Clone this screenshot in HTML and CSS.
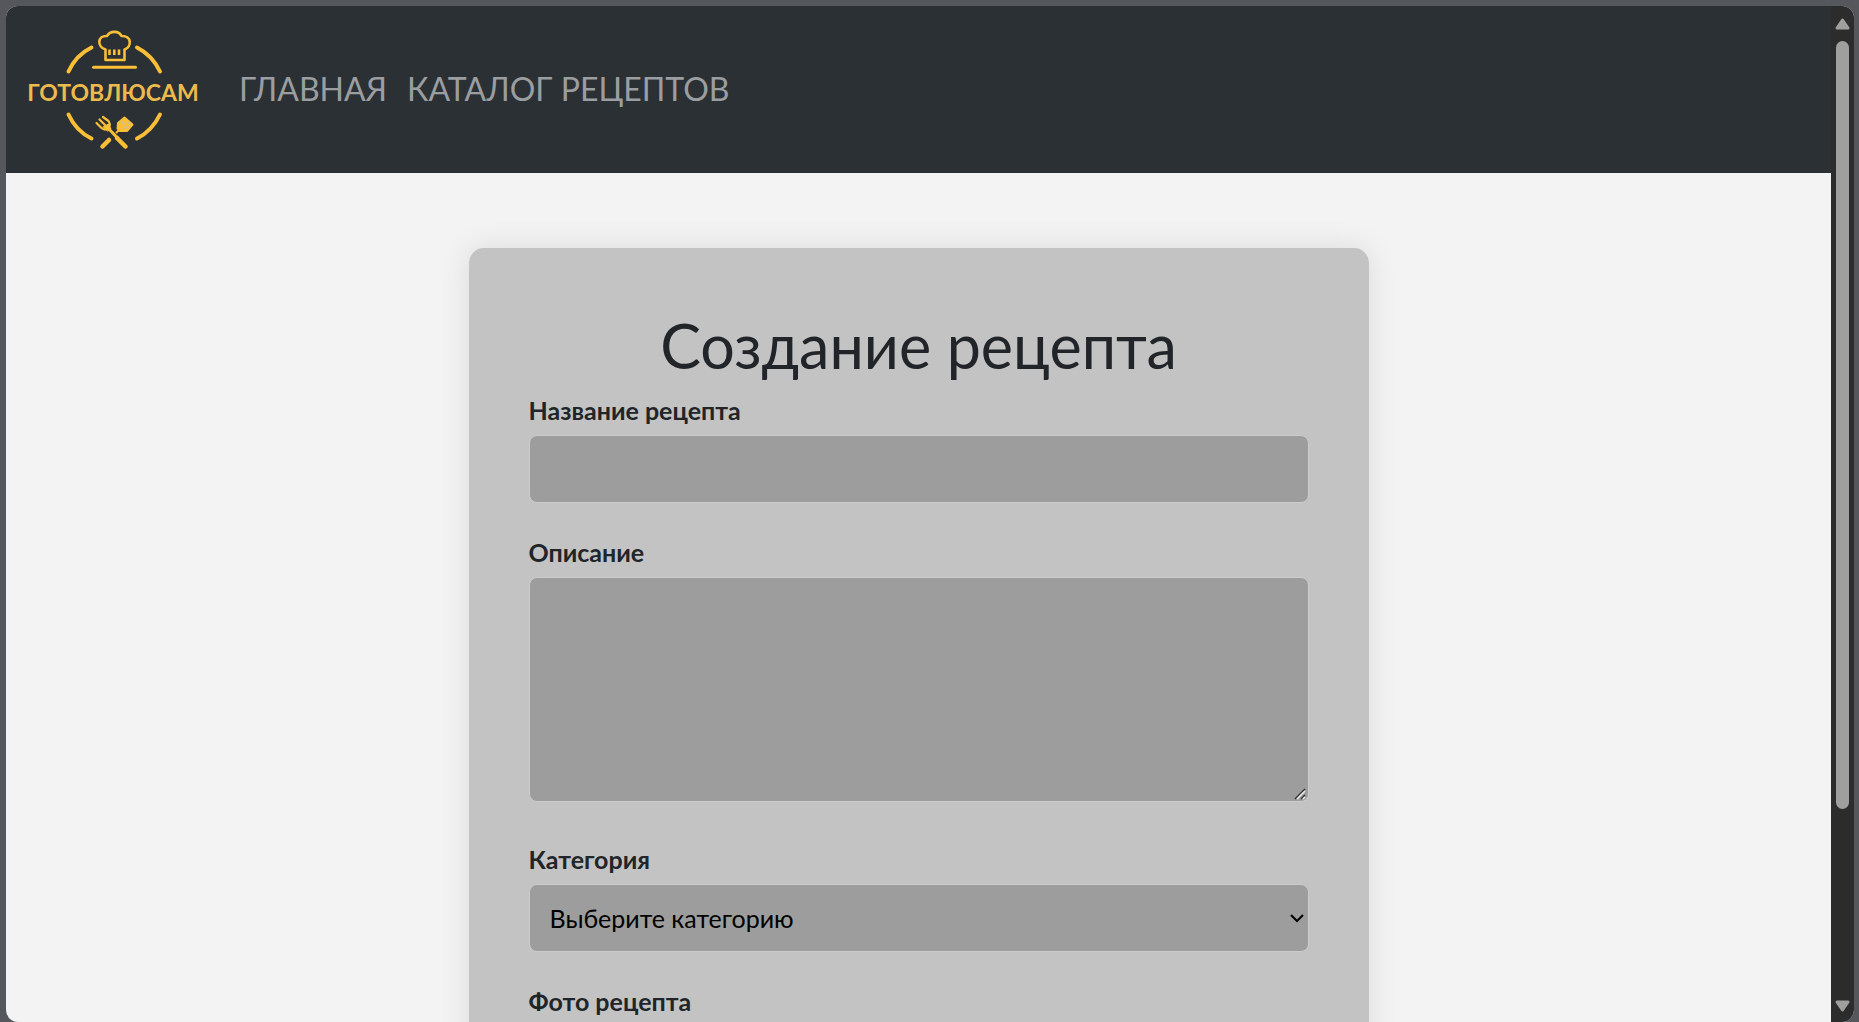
FILE: index.html
```html
<!DOCTYPE html>
<html lang="ru">
<head>
<meta charset="utf-8">
<title>Создание рецепта</title>
<link rel="stylesheet" href="styles.css">
</head>
<body>
<div class="window">
  <div class="page">
    <header class="navbar">
      <a class="brand" href="#" aria-label="ГотовлюСам">
        <svg width="180" height="124" viewBox="24 27 180 124" fill="none" stroke="#fabf37" stroke-width="4" stroke-linecap="round" stroke-linejoin="round">
          <path d="M68.500 71.500Q76 55 91.500 47.500M137 47.500Q152 55 160 71.500M68.500 114.500Q76 131 91.500 138.500M137 138.500Q152 131 160 114.500"/>
          <path d="M93.500 67.300H135.500" stroke-width="3"/>
          <path d="M105.500 60V49.500C97 47 97 35.500 107 36C110 30.500 119 30.500 121.500 36C132 35.500 132 47 124.500 49.500V60Z" stroke-width="2.600"/>
          <path d="M109.500 49.500V55M114.300 49.500V55M119 49.500V55" stroke-width="2.600" stroke-linecap="butt"/>
          <path d="M96.500 123L101.500 128Q105 131 108.500 128Q111 125 108.500 121L103 117M99.500 119.500L105 125" stroke-width="2.200"/>
          <path d="M103 127L108.500 124L111 129L108 131Z" fill="#fabf37" stroke-width="1"/>
          <path d="M108 128L118 138.500" stroke-width="3"/>
          <path d="M117 138L125.500 146.500" stroke-width="4.500"/>
          <path d="M102.500 146.500L109 140" stroke-width="4.500"/>
          <path d="M116.500 132.500L120 129" stroke-width="2"/>
          <path d="M124.500 117.500L132.500 124.500L127 131L119.500 131L117.500 128.500L118 123Z" fill="#fabf37" stroke-width="2"/>
          <path d="M121.500 121.500L124 124M124.500 128L127.500 126.500M128.500 123L129.500 124" stroke="#d2c08a" stroke-width="2"/>
          <text class="brand-name" x="113" y="101" text-anchor="middle">ГОТОВЛЮСАМ</text>
        </svg>
      </a>
      <nav class="nav">
        <a class="nav-link" href="#">ГЛАВНАЯ</a>
        <a class="nav-link" href="#">КАТАЛОГ РЕЦЕПТОВ</a>
      </nav>
    </header>
    <main class="main">
      <form class="card">
        <h1 class="title">Создание рецепта</h1>
        <div class="field">
          <label class="label" for="name">Название рецепта</label>
          <input class="control" id="name" type="text">
        </div>
        <div class="field">
          <label class="label" for="description">Описание</label>
          <textarea class="control control-area" id="description"></textarea>
        </div>
        <div class="field">
          <label class="label" for="category">Категория</label>
          <select class="control control-select" id="category"><option>Выберите категорию</option></select>
        </div>
        <div class="field">
          <label class="label" for="photo">Фото рецепта</label>
          <input class="control" id="photo" type="file">
        </div>
      </form>
    </main>
  </div>
  <div class="scrollbar" aria-hidden="true">
    <svg width="15" height="12" viewBox="0 0 15 12"><path d="M7.500 2L13 10H2Z" fill="#9f9f9f" stroke="#9f9f9f" stroke-width="3" stroke-linejoin="round"/></svg>
    <div class="track"><div class="thumb"></div></div>
    <svg width="15" height="12" viewBox="0 0 15 12"><path d="M7.500 10L13 2H2Z" fill="#9f9f9f" stroke="#9f9f9f" stroke-width="3" stroke-linejoin="round"/></svg>
  </div>
</div>
</body>
</html>
```
FILE: styles.css
```css
* {
  box-sizing: border-box;
}

body {
  margin: 0;
  height: 100vh;
  padding: 6px 5px 0 6px;
  overflow: hidden;
  background: #56575c;
  color: #212529;
  font-family: "Comic Sans MS", Lato, "Noto Sans", sans-serif;
}

.window {
  display: flex;
  height: 100%;
  overflow: hidden;
  border-radius: 12px;
  background: #f3f3f3;
}

.page {
  flex: 1;
  min-width: 0;
  overflow: hidden;
}

.navbar {
  display: flex;
  align-items: center;
  gap: 25px;
  padding: 21px 18px 22px;
  background: #2b3034;
}

.brand svg {
  display: block;
}

.brand-name {
  fill: #edbb4b;
  stroke: none;
  font-size: 23px;
  font-weight: 700;
}

.nav {
  display: flex;
}

.nav-link {
  padding: 10px;
  color: #9b9ea1;
  font-size: 32px;
  line-height: 46px;
  text-decoration: none;
}

.main {
  padding: 75px 24px;
}

.card {
  max-width: 900px;
  margin: 0 auto;
  padding: 60px;
  border-radius: 15px;
  background: #c3c3c3;
  box-shadow: 0 0 30px rgba(0, 0, 0, 0.1);
}

.title {
  margin: 0 0 8px;
  font-size: 61px;
  font-weight: 400;
  line-height: 76px;
  text-align: center;
}

.field {
  margin-bottom: 31px;
}

.label {
  display: block;
  margin-bottom: 7px;
  font-size: 25px;
  font-weight: 700;
  line-height: 36px;
}

.control {
  display: block;
  width: 100%;
  height: 68px;
  padding: 16px 20px;
  border: 1px solid #cccccc;
  border-radius: 8px;
  background-color: #9d9d9d;
  color: #000;
  font-family: inherit;
  font-size: 25px;
}

.control-area {
  height: 225px;
  margin-bottom: 39px;
  resize: vertical;
}

.control-area::-webkit-resizer {
  background: url("data:image/svg+xml,%3Csvg xmlns='http://www.w3.org/2000/svg' width='15' height='15' fill='none' stroke-width='1.5'%3E%3Cpath d='M2 13L12 3M8 13L12 9' stroke='%23333'/%3E%3Cpath d='M4 13L12 5M10 13L12 11' stroke='%23eee'/%3E%3C/svg%3E") no-repeat right bottom;
}

.control-select {
  appearance: none;
  background-image: url("data:image/svg+xml,%3Csvg xmlns='http://www.w3.org/2000/svg' width='14' height='10'%3E%3Cpath d='M1 2L7 8L13 2' fill='none' stroke='%23000' stroke-width='2'/%3E%3C/svg%3E");
  background-position: right 4px center;
  background-repeat: no-repeat;
}

.scrollbar {
  display: flex;
  flex-direction: column;
  align-items: center;
  gap: 11px;
  width: 23px;
  padding: 12px 0 10px;
  background: #2c2c2c;
}

.track {
  flex: 1;
}

.thumb {
  width: 13px;
  height: 81%;
  border-radius: 7px;
  background: #9f9f9f;
}
```
